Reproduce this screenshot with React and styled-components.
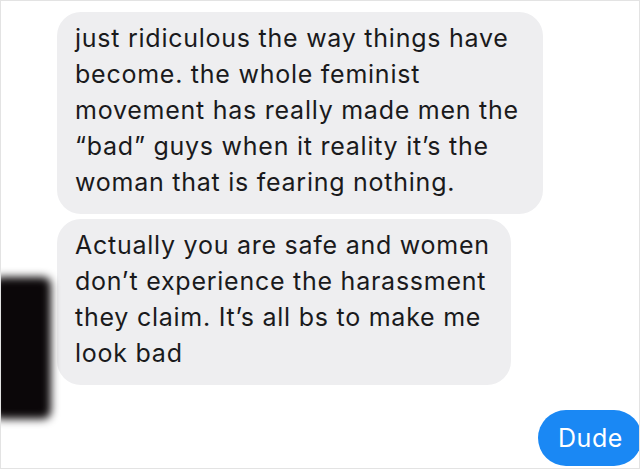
import React from 'react'
import styled, { createGlobalStyle } from 'styled-components'

const GlobalStyle = createGlobalStyle`
  html, body {
    margin: 0;
    padding: 0;
    background: #ffffff;
  }
`;

const Screen = styled.div`
  position: relative;
  box-sizing: border-box;
  width: 640px;
  height: 469px;
  overflow: hidden;
  background: #ffffff;
  border: 1px solid #e3e3e3;
  display: flex;
  flex-direction: column;
  padding: 11px 0 0 56px;
  font-family: Inter, "Open Sans", sans-serif;
`;

const Thread = styled.div`
  display: flex;
  flex-direction: column;
  gap: 5px;
`;

const Bubble = styled.div`
  box-sizing: border-box;
  align-self: flex-start;
  width: ${p => p.$width};
  padding: 8px 10px 14px 18px;
  border-radius: 24px;
  background: #eeeef0;
  color: #1a1a1c;
  font-size: 25px;
  line-height: 36px;
  letter-spacing: 0.75px;
  white-space: pre-line;
`;

const Outgoing = styled.div`
  box-sizing: border-box;
  align-self: flex-end;
  height: 56px;
  display: flex;
  align-items: center;
  margin-top: 20px;
  margin-right: -3px;
  padding: 0 19px 0 20px;
  border-radius: 28px;
  background: #1a88f4;
  color: #ffffff;
  font-size: 25px;
  letter-spacing: 0.6px;
`;

const Redaction = styled.div`
  position: absolute;
  left: -8px;
  top: 276px;
  width: 58px;
  height: 142px;
  background: #0b0709;
  border-radius: 8px;
  filter: blur(4px);
`;

const messages = [
  {
    width: '486px',
    text: 'just ridiculous the way things have\nbecome. the whole feminist\nmovement has really made men the\n\u201Cbad\u201D guys when it reality it\u2019s the\nwoman that is fearing nothing.',
  },
  {
    width: '454px',
    text: 'Actually you are safe and women\ndon\u2019t experience the harassment\nthey claim. It\u2019s all bs to make me\nlook bad',
  },
];

const App = () => (
  <>
    <GlobalStyle />
    <Screen>
      <Thread>
        {messages.map((m, i) => (
          <Bubble key={i} $width={m.width}>{m.text}</Bubble>
        ))}
        <Outgoing>Dude</Outgoing>
      </Thread>
      <Redaction />
    </Screen>
  </>
)

export default App
